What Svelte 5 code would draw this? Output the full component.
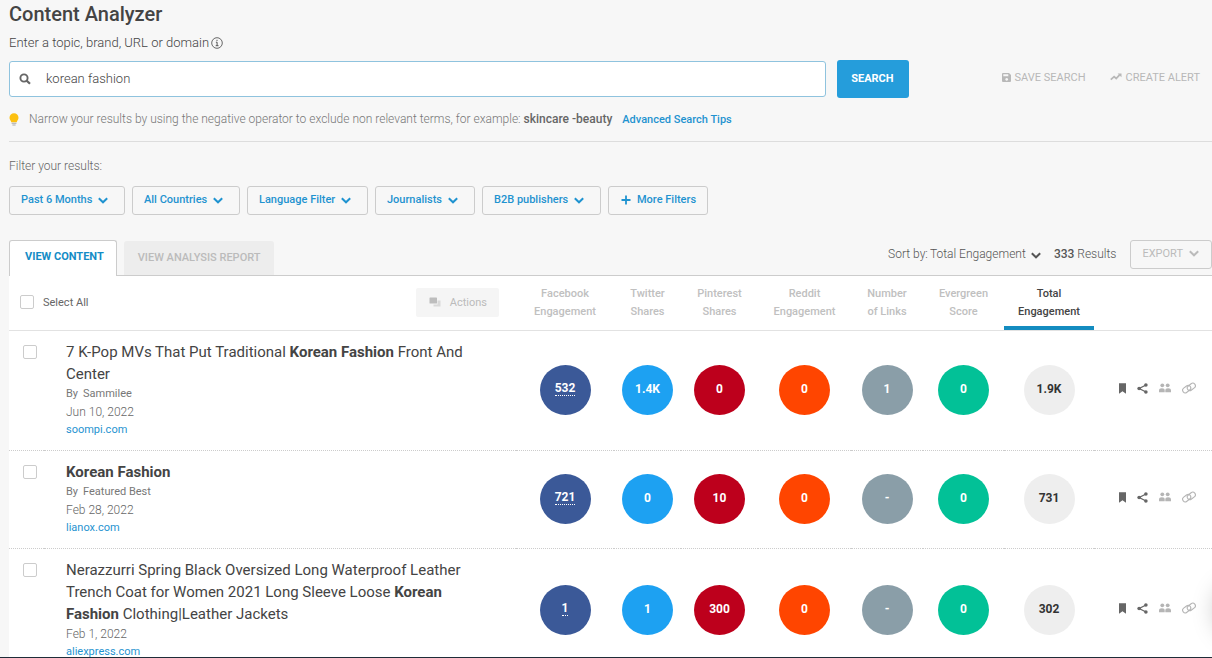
<script>
  let query = $state('korean fashion');
  let selected = $state([false, false, false]);
  let allSelected = $derived(selected.every(Boolean));

  const filters = ['Past 6 Months', 'All Countries', 'Language Filter', 'Journalists', 'B2B publishers'];

  const columns = [
    { key: 'facebook', lines: ['Facebook', 'Engagement'] },
    { key: 'twitter', lines: ['Twitter', 'Shares'] },
    { key: 'pinterest', lines: ['Pinterest', 'Shares'] },
    { key: 'reddit', lines: ['Reddit', 'Engagement'] },
    { key: 'links', lines: ['Number', 'of Links'] },
    { key: 'evergreen', lines: ['Evergreen', 'Score'] },
    { key: 'total', lines: ['Total', 'Engagement'] }
  ];

  const results = [
    {
      title: [
        { text: '7 K-Pop MVs That Put Traditional ' },
        { text: 'Korean Fashion', match: true },
        { text: ' Front And Center' }
      ],
      author: 'Sammilee',
      date: 'Jun 10, 2022',
      domain: 'soompi.com',
      facebook: '532',
      twitter: '1.4K',
      pinterest: '0',
      reddit: '0',
      links: '1',
      evergreen: '0',
      total: '1.9K'
    },
    {
      title: [{ text: 'Korean Fashion', match: true }],
      author: 'Featured Best',
      date: 'Feb 28, 2022',
      domain: 'lianox.com',
      facebook: '721',
      twitter: '0',
      pinterest: '10',
      reddit: '0',
      links: '-',
      evergreen: '0',
      total: '731'
    },
    {
      title: [
        { text: 'Nerazzurri Spring Black Oversized Long Waterproof Leather Trench Coat for Women 2021 Long Sleeve Loose ' },
        { text: 'Korean Fashion', match: true },
        { text: ' Clothing|Leather Jackets' }
      ],
      author: '',
      date: 'Feb 1, 2022',
      domain: 'aliexpress.com',
      facebook: '1',
      twitter: '1',
      pinterest: '300',
      reddit: '0',
      links: '-',
      evergreen: '0',
      total: '302'
    }
  ];

  function toggleAll() {
    const next = !allSelected;
    selected = selected.map(() => next);
  }
</script>

{#snippet chevron()}
  <svg class="chevron" viewBox="0 0 10 7" width="10" height="7" aria-hidden="true">
    <path d="M.8 1.3l4.2 4 4.2-4" fill="none" stroke="currentColor" stroke-width="2" />
  </svg>
{/snippet}

<div class="page">
  <header class="search-area">
    <h1>Content Analyzer</h1>
    <label class="topic-label" for="topic">
      Enter a topic, brand, URL or domain
      <svg viewBox="0 0 12 12" width="12" height="12" aria-hidden="true">
        <circle cx="6" cy="6" r="5.3" fill="none" stroke="currentColor" stroke-width="0.8" />
        <path d="M6 2.8v1.2M4.9 5.2H6.1V8.6M4.7 8.7h2.8" fill="none" stroke="currentColor" stroke-width="0.9" />
      </svg>
    </label>

    <form class="search-row" onsubmit={(e) => e.preventDefault()}>
      <div class="search-box">
        <svg viewBox="0 0 12 12" width="12" height="12" aria-hidden="true">
          <circle cx="5" cy="5" r="3.6" fill="none" stroke="currentColor" stroke-width="1.9" />
          <path d="M7.6 7.6l3.4 3.2" stroke="currentColor" stroke-width="2.2" />
        </svg>
        <input id="topic" type="text" bind:value={query} />
      </div>
      <button class="search-btn" type="submit">SEARCH</button>
      <div class="search-actions">
        <button type="button">
          <svg viewBox="0 0 9 9" width="9" height="9" aria-hidden="true">
            <path fill="currentColor" fill-rule="evenodd" d="M0 1a1 1 0 0 1 1-1h6l2 2v6a1 1 0 0 1-1 1H1a1 1 0 0 1-1-1zM1.3 1.2v2h5v-2zM4.7 5a1.4 1.4 0 1 0 .01 0z" />
          </svg>
          SAVE SEARCH
        </button>
        <button type="button">
          <svg viewBox="0 0 12 8" width="12" height="8" aria-hidden="true">
            <path d="M.8 6.6l3.3-3 2.1 1.9 3.4-3.6" fill="none" stroke="currentColor" stroke-width="1.8" />
            <path d="M7.6.4h3.9v3.9z" fill="currentColor" />
          </svg>
          CREATE ALERT
        </button>
      </div>
    </form>

    <p class="tip">
      <svg viewBox="0 0 10 13" width="10" height="13" aria-hidden="true">
        <path d="M5 .2a4.5 4.5 0 0 0-4.5 4.5c0 1.9 1.3 2.7 1.8 4.5h5.4c.5-1.8 1.8-2.6 1.8-4.5A4.5 4.5 0 0 0 5 .2z" fill="#fcc010" />
        <path d="M2.6 10.3h4.8M3.4 12h3.2" stroke="#a9a9a9" stroke-width="1.1" />
      </svg>
      <span>
        Narrow your results by using the negative operator to exclude non relevant terms, for example:
        <strong>skincare -beauty</strong>
      </span>
      <a href="#tips">Advanced Search Tips</a>
    </p>
  </header>

  <section class="filters">
    <p>Filter your results:</p>
    <div class="filter-row">
      {#each filters as filter}
        <div class="dropdown">
          <select aria-label={filter}>
            <option>{filter}</option>
          </select>
          {@render chevron()}
        </div>
      {/each}
      <button class="more-filters" type="button">
        <svg viewBox="0 0 10 10" width="10" height="10" aria-hidden="true">
          <path d="M5 .5v9M.5 5h9" stroke="currentColor" stroke-width="1.8" />
        </svg>
        More Filters
      </button>
    </div>
  </section>

  <div class="tab-bar">
    <div class="tabs" role="tablist">
      <button class="tab active" role="tab" aria-selected="true">VIEW CONTENT</button>
      <button class="tab" role="tab" aria-selected="false">VIEW ANALYSIS REPORT</button>
    </div>
    <div class="result-tools">
      <label for="sort">Sort by:</label>
      <div class="sort">
        <select id="sort">
          <option>Total Engagement</option>
        </select>
        {@render chevron()}
      </div>
      <span class="count"><strong>333</strong> Results</span>
      <button class="export" type="button">
        EXPORT
        {@render chevron()}
      </button>
    </div>
  </div>

  <table>
    <colgroup>
      <col class="c-check" />
      <col />
      {#each columns as column}
        <col class="c-{column.key}" />
      {/each}
      <col class="c-actions" />
    </colgroup>
    <thead>
      <tr>
        <th colspan="2">
          <div class="bulk">
            <label>
              <input type="checkbox" checked={allSelected} onchange={toggleAll} />
              Select All
            </label>
            <button type="button" disabled>
              <svg viewBox="0 0 12 10" width="12" height="10" aria-hidden="true">
                <path d="M8.5 3.5H11.5V9.5H4.5V7.5H8.5z" fill="#d9d9d9" />
                <rect x="0.5" y="0.5" width="7.5" height="6" rx="0.6" fill="#bdbdbd" />
              </svg>
              Actions
            </button>
          </div>
        </th>
        {#each columns as column}
          <th class="metric-head" class:sorted={column.key === 'total'} scope="col">
            {column.lines[0]}<br />{column.lines[1]}
          </th>
        {/each}
        <th></th>
      </tr>
    </thead>
    <tbody>
      {#each results as result, i}
        <tr>
          <td class="check">
            <input type="checkbox" aria-label="Select {result.domain}" bind:checked={selected[i]} />
          </td>
          <td class="content">
            <a class="title" href="#result-{i}">
              {#each result.title as part}{#if part.match}<strong>{part.text}</strong>{:else}{part.text}{/if}{/each}
            </a>
            {#if result.author}
              <div class="author"><span>By</span><span>{result.author}</span></div>
            {/if}
            <div class="date">{result.date}</div>
            <a class="domain" href="#{result.domain}">{result.domain}</a>
          </td>
          {#each columns as column}
            <td class="metric">
              <div class="circle {column.key}"><span>{result[column.key]}</span></div>
            </td>
          {/each}
          <td>
            <div class="row-actions">
              <button type="button" aria-label="Bookmark">
                <svg viewBox="0 0 7 11" width="7" height="11">
                  <path d="M0 .3h7v10.4L3.5 8.2 0 10.7z" fill="currentColor" />
                </svg>
              </button>
              <button type="button" aria-label="Share">
                <svg viewBox="0 0 11 11" width="11" height="11">
                  <path d="M9 2L2.2 5.5 9 9" fill="none" stroke="currentColor" stroke-width="1.3" />
                  <circle cx="8.9" cy="2" r="1.8" fill="currentColor" />
                  <circle cx="2.1" cy="5.5" r="1.8" fill="currentColor" />
                  <circle cx="8.9" cy="9" r="1.8" fill="currentColor" />
                </svg>
              </button>
              <button class="muted" type="button" aria-label="View sharers">
                <svg viewBox="0 0 12 10" width="12" height="10">
                  <circle cx="3.3" cy="2.3" r="1.9" fill="currentColor" />
                  <circle cx="8.7" cy="2.3" r="1.9" fill="currentColor" />
                  <path d="M0 9.300V7.600Q0 5.200 2.900 5.200T5.700 7.600V9.300zM6.300 9.300V7.600Q6.300 5.200 9.100 5.200T12 7.600V9.300z" fill="currentColor" />
                </svg>
              </button>
              <button class="muted" type="button" aria-label="View backlinks">
                <svg viewBox="0 0 14 12" width="14" height="12" fill="none" stroke="currentColor" stroke-width="1.1">
                  <rect x="-4.4" y="-2.6" width="8.8" height="5.2" rx="2.6" transform="translate(4.7 7.1) rotate(-38)" />
                  <rect x="-4.4" y="-2.6" width="8.8" height="5.2" rx="2.6" transform="translate(9.3 4.9) rotate(-38)" />
                </svg>
              </button>
            </div>
          </td>
        </tr>
      {/each}
    </tbody>
  </table>

  <div class="chat-shadow"></div>
  <div class="bottom-edge"></div>
</div>

<style>
  :global(body) {
    margin: 0;
    background: #f7f7f7;
  }

  .page {
    position: relative;
    box-sizing: border-box;
    height: 100vh;
    padding-left: 9px;
    overflow: hidden;
    color: #666;
    font-family: Roboto, 'Liberation Sans', sans-serif;
    font-size: 12px;
  }

  button,
  input,
  select {
    margin: 0;
    font-family: inherit;
  }

  button,
  select {
    cursor: pointer;
  }

  svg {
    display: block;
    flex: none;
  }

  a {
    color: #1f93d0;
    text-decoration: none;
  }

  h1 {
    margin: 0;
    padding-top: 2px;
    color: #444;
    font-size: 20px;
    font-weight: 500;
    line-height: 24px;
  }

  .search-area {
    border-bottom: 1px solid #ddd;
  }

  .topic-label {
    display: flex;
    align-items: center;
    gap: 2px;
    padding: 8px 0;
    color: #444;
    font-size: 13px;
    font-weight: 300;
    line-height: 18px;
  }

  .search-row {
    display: flex;
    align-items: center;
  }

  .search-box {
    display: flex;
    flex: 1;
    align-items: center;
    box-sizing: border-box;
    height: 36px;
    padding-left: 9px;
    border: 1px solid #8fc3de;
    border-radius: 3px;
    background: #fff;
    color: #666;
  }

  .search-box input {
    flex: 1;
    min-width: 0;
    padding: 0 15px 2px;
    border: 0;
    outline: 0;
    background: none;
    color: #444;
    font-size: 13px;
    font-weight: 300;
  }

  .search-btn {
    height: 38px;
    margin-left: 11px;
    padding: 0 15px 2px 14px;
    border: 0;
    border-radius: 3px;
    background: #259ddb;
    color: #fff;
    font-size: 11px;
    font-weight: 700;
  }

  .search-actions {
    display: flex;
    gap: 24px;
    margin-left: 93px;
    padding: 0 12px 4px 0;
  }

  .search-actions button {
    display: flex;
    align-items: center;
    gap: 4px;
    padding: 0;
    border: 0;
    background: none;
    color: #b8b8b8;
    font-size: 11px;
  }

  .tip {
    display: flex;
    align-items: center;
    margin: 0;
    padding: 12px 0;
    color: #777;
    font-weight: 300;
    line-height: 19px;
  }

  .tip span {
    margin: 0 10px;
  }

  .tip strong {
    color: #666;
    font-weight: 500;
  }

  .tip a {
    font-size: 11px;
    font-weight: 500;
  }

  .filters p {
    margin: 0;
    padding: 15px 0 11px;
    font-weight: 300;
    line-height: 18px;
  }

  .filter-row {
    display: flex;
    gap: 7px;
  }

  .dropdown,
  .sort {
    position: relative;
    color: #1f93d0;
  }

  .dropdown .chevron,
  .sort .chevron {
    position: absolute;
    top: 11px;
    right: 17px;
    pointer-events: none;
  }

  .dropdown select,
  .more-filters {
    box-sizing: border-box;
    height: 29px;
    border: 1px solid #ccc;
    border-radius: 3px;
    background: none;
    color: inherit;
    font-size: 11px;
    font-weight: 500;
  }

  select {
    appearance: none;
    outline: 0;
  }

  .dropdown select {
    padding: 0 31px 2px 11px;
  }

  .more-filters {
    display: flex;
    align-items: center;
    gap: 6px;
    padding: 0 11px 2px 12px;
    color: #1f93d0;
  }

  .tab-bar {
    display: flex;
    align-items: flex-end;
    justify-content: space-between;
    margin-top: 25px;
    border-bottom: 1px solid #ccc;
  }

  .tabs {
    display: flex;
    align-items: flex-end;
    gap: 7px;
  }

  .tab {
    height: 34px;
    padding: 0 14px 2px;
    border: 0;
    border-radius: 3px 3px 0 0;
    background: #ededed;
    color: #bbb;
    font-size: 11px;
    font-weight: 500;
  }

  .tab.active {
    height: 36px;
    margin-bottom: -1px;
    padding: 0 12px 4px 15px;
    border: 1px solid #ccc;
    border-bottom: 0;
    background: #fff;
    color: #148cc6;
    font-weight: 700;
  }

  .result-tools {
    display: flex;
    align-items: center;
    margin-bottom: 6px;
    color: #555;
    font-weight: 300;
    line-height: 29px;
  }

  .sort {
    margin-right: 13px;
    color: #555;
  }

  .sort select {
    display: block;
    height: 29px;
    padding: 0 15px 1px 2px;
    border: 0;
    background: none;
    color: inherit;
    font-size: 12px;
    font-weight: 300;
  }

  .sort .chevron {
    top: 12px;
    right: 0;
  }

  .count strong {
    font-weight: 500;
  }

  .export {
    display: flex;
    align-items: center;
    gap: 6px;
    box-sizing: border-box;
    height: 29px;
    margin-left: 14px;
    padding: 0 12px 2px 11px;
    border: 1px solid #ccc;
    border-radius: 3px;
    background: none;
    color: #bbb;
    font-size: 11px;
  }

  table {
    width: 100%;
    border-collapse: separate;
    border-spacing: 0;
    table-layout: fixed;
    background: #fff;
  }

  .c-check { width: 35px; }
  .c-facebook { width: 98px; }
  .c-twitter { width: 67px; }
  .c-pinterest { width: 77px; }
  .c-reddit { width: 93px; }
  .c-links { width: 72px; }
  .c-evergreen { width: 81px; }
  .c-total { width: 90px; }
  .c-actions { width: 118px; }

  th {
    padding: 0;
    border-bottom: 1px solid #e2e2e2;
    font-weight: 400;
  }

  .bulk {
    display: flex;
    align-items: center;
    justify-content: space-between;
    padding: 0 17px 2px 11px;
  }

  .bulk label {
    display: flex;
    align-items: center;
    gap: 9px;
    font-size: 11px;
  }

  .bulk button {
    display: flex;
    align-items: center;
    gap: 9px;
    height: 29px;
    padding: 0 12px 0 13px;
    border: 0;
    border-radius: 2px;
    background: #f5f5f5;
    color: #bbb;
    font-size: 11px;
  }

  input[type='checkbox'] {
    appearance: none;
    display: block;
    box-sizing: border-box;
    width: 14px;
    height: 14px;
    border: 1px solid #ccc;
    border-radius: 2px;
    background: #fff;
  }

  input[type='checkbox']:checked {
    background: #259ddb;
  }

  .metric-head {
    padding: 9px 0;
    color: #c0c0c0;
    font-size: 11px;
    font-weight: 500;
    line-height: 18px;
  }

  .metric-head.sorted {
    box-shadow: inset 0 -4px #148cc0;
    color: #444;
  }

  td {
    padding: 0;
    border-bottom: 1px dotted #ccc;
  }

  .check {
    padding: 14px 0 0 14px;
    vertical-align: top;
  }

  .content {
    padding: 10px 24px 11px 22px;
    line-height: 18px;
    vertical-align: top;
  }

  .title {
    display: block;
    color: #444;
    font-size: 15px;
    line-height: 22px;
  }

  .title strong {
    font-weight: 700;
  }

  .author {
    display: flex;
    gap: 5px;
    color: #777;
    font-size: 11px;
  }

  .date {
    color: #666;
    font-weight: 300;
  }

  .domain {
    display: block;
    font-size: 11px;
  }

  .metric {
    padding-bottom: 1px;
  }

  .circle {
    display: flex;
    align-items: center;
    justify-content: center;
    box-sizing: border-box;
    width: 51px;
    height: 50px;
    margin: 0 auto;
    padding-bottom: 2px;
    border-radius: 50%;
    color: #fff;
    font-weight: 700;
    line-height: 15px;
  }

  .facebook { background: #3b5998; }
  .twitter { background: #1da1f2; }
  .pinterest { background: #bd001c; }
  .reddit { background: #ff4500; }
  .links { background: #8a9ea8; }
  .evergreen { background: #02c197; }
  .total { background: #eee; color: #333; }

  .facebook span {
    border-bottom: 1px dotted #fff;
    line-height: 13px;
  }

  .row-actions {
    display: flex;
    align-items: center;
    gap: 11px;
    padding: 0 0 5px 25px;
  }

  .row-actions button {
    padding: 0;
    border: 0;
    background: none;
    color: #666;
  }

  .row-actions .muted {
    color: #b5b5b5;
  }

  /* glow of the chat bubble tucked behind the right edge */
  .chat-shadow {
    position: absolute;
    right: -60px;
    bottom: 20px;
    width: 56px;
    height: 56px;
    border-radius: 50%;
    box-shadow: 0 0 24px rgba(0, 0, 0, 0.25);
  }

  .bottom-edge {
    position: absolute;
    right: 0;
    bottom: 0;
    left: 0;
    height: 1px;
    background: #1f2c38;
  }
</style>
